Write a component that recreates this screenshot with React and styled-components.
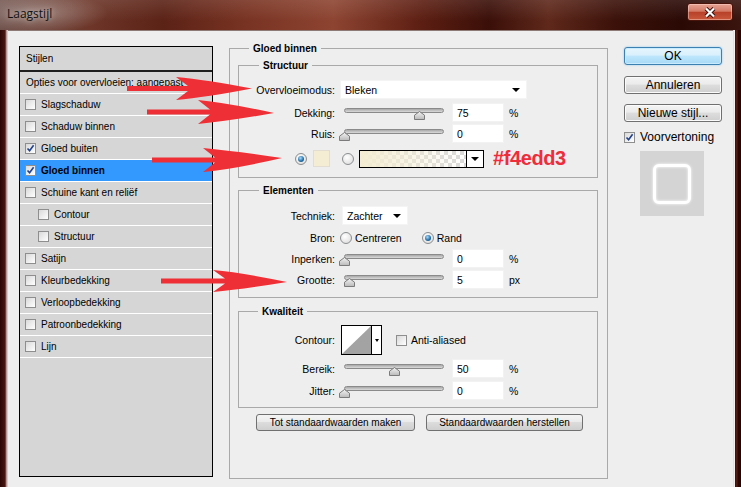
import React from "react";
import styled, { createGlobalStyle } from "styled-components";

const GlobalStyle = createGlobalStyle`
  html, body { margin: 0; padding: 0; }
  body {
    background: #2b0906;
    font-family: "Liberation Sans", Arial, sans-serif;
    font-size: 10px;
    color: #000;
  }
  * { box-sizing: border-box; }
`;

const styleList = [
  { label: "Slagschaduw" },
  { label: "Schaduw binnen" },
  { label: "Gloed buiten", checked: true },
  { label: "Gloed binnen", checked: true, active: true },
  { label: "Schuine kant en reliëf" },
  { label: "Contour", sub: true },
  { label: "Structuur", sub: true },
  { label: "Satijn" },
  { label: "Kleurbedekking" },
  { label: "Verloopbedekking" },
  { label: "Patroonbedekking" },
  { label: "Lijn" },
];

// arrow shape: shaft from x0, barbs at xb, tip at xt
const arrowPath = (x0, y, xb, xt, yt, hw) => {
  const sw = 2.5;
  const cx = xb + (xt - xb) * 0.4;
  return `M${x0} ${y - sw} L${xb + 12} ${y - sw} L${xb} ${y - hw} Q${cx} ${y - hw * 0.75} ${xt} ${yt} Q${cx} ${y + hw * 0.75} ${xb} ${y + hw} L${xb + 12} ${y + sw} L${x0} ${y + sw} Z`;
};

const arrows = [
  [127, 88.5, 176, 252, 88.5, 11.5],
  [147, 112, 198, 274, 113, 12],
  [152, 160, 203, 282, 158, 12],
  [161, 281, 213, 287, 282, 11],
];

const Check = ({ on }) => (
  <CheckBox>
    {on && (
      <svg width="9" height="9" viewBox="0 0 9 9">
        <path d="M1.5 4.5 L3.6 6.8 L7.6 1.2" fill="none" stroke="#22418f" strokeWidth="1.6" />
      </svg>
    )}
  </CheckBox>
);

const Slider = ({ pct }) => (
  <SliderWrap>
    <Track />
    <Thumb style={{ left: `calc(${pct}% - 5px)` }} width="11" height="9" viewBox="0 0 11 9">
      <defs>
        <linearGradient id="tg" x1="0" y1="0" x2="0" y2="1">
          <stop offset="0" stopColor="#f4f4f4" />
          <stop offset="1" stopColor="#b9b9b9" />
        </linearGradient>
      </defs>
      <polygon points="0.5,8.5 0.5,4.2 5.5,0.5 10.5,4.2 10.5,8.5" fill="url(#tg)" stroke="#7b7b7b" />
    </Thumb>
  </SliderWrap>
);

const SliderRow = ({ label, pct, value, unit, mt }) => (
  <Row $mt={mt}>
    <Label>{label}</Label>
    <Slider pct={pct} />
    <NumInput>{value}</NumInput>
    <Unit>{unit}</Unit>
  </Row>
);

const App = () => {
  return (
    <>
      <GlobalStyle />
      <Window>
        <TitleBar>
          <Title>Laagstijl</Title>
          <CloseButton>
            <svg width="14" height="11" viewBox="0 0 14 11">
              <path d="M3 1.5 L11 9.5 M11 1.5 L3 9.5" stroke="#3a0d08" strokeWidth="4" />
              <path d="M3 1.5 L11 9.5 M11 1.5 L3 9.5" stroke="#fff" strokeWidth="2.2" />
            </svg>
          </CloseButton>
        </TitleBar>
        <Body>
          <SideFrame $side="left" />
          <Client>
            <LeftPanel>
              <PanelHeader>Stijlen</PanelHeader>
              <StyleRow $pad={6}>Opties voor overvloeien: aangepast</StyleRow>
              {styleList.map((s) => (
                <StyleRow key={s.label} $pad={s.sub ? 18 : 5} $active={s.active}>
                  <Check on={s.checked} />
                  {s.label}
                </StyleRow>
              ))}
            </LeftPanel>

            <OuterGroup>
              <GroupTitle $indent={11}>Gloed binnen</GroupTitle>
              <Group $mt={10} $pb={8}>
                <GroupTitle $indent={20}>Structuur</GroupTitle>
                <Row $mt={7}>
                  <Label>Overvloeimodus:</Label>
                  <Select $w={187} $ml={5}>
                    Bleken
                    <Caret />
                  </Select>
                </Row>
                <SliderRow label="Dekking:" pct={75} value="75" unit="%" mt={2} />
                <SliderRow label="Ruis:" pct={0} value="0" unit="%" mt={0} />
                <Row $mt={4}>
                  <Radio $on $ml={56} />
                  <Swatch />
                  <Radio $ml={12} />
                  <GradientPicker>
                    <GradientFill />
                    <PickerArrow>
                      <Caret />
                    </PickerArrow>
                  </GradientPicker>
                  <HexNote>#f4edd3</HexNote>
                </Row>
              </Group>

              <Group $mt={12} $pb={7}>
                <GroupTitle $indent={20}>Elementen</GroupTitle>
                <Row $mt={8}>
                  <Label>Techniek:</Label>
                  <Select $w={66} $ml={7}>
                    Zachter
                    <Caret />
                  </Select>
                </Row>
                <Row $mt={1}>
                  <Label>Bron:</Label>
                  <Radio $ml={5} />
                  <OptionText>Centreren</OptionText>
                  <Radio $on $ml={20} />
                  <OptionText>Rand</OptionText>
                </Row>
                <SliderRow label="Inperken:" pct={0} value="0" unit="%" mt={0} />
                <SliderRow label="Grootte:" pct={5} value="5" unit="px" mt={0} />
              </Group>

              <Group $mt={13} $pb={6}>
                <GroupTitle $indent={19}>Kwaliteit</GroupTitle>
                <Row $mt={7} $h={30}>
                  <Label>Contour:</Label>
                  <ContourBox>
                    <svg width="29" height="28" viewBox="0 0 29 28">
                      <polygon points="0,28 29,0 29,28" fill="#a3a3a3" />
                    </svg>
                    <ContourArrow>
                      <Caret $small />
                    </ContourArrow>
                  </ContourBox>
                  <AntiAlias>
                    <Check />
                    Anti-aliased
                  </AntiAlias>
                </Row>
                <SliderRow label="Bereik:" pct={50} value="50" unit="%" mt={3} />
                <SliderRow label="Jitter:" pct={0} value="0" unit="%" mt={1} />
              </Group>

              <ButtonRow>
                <SmallButton $w={159}>Tot standaardwaarden maken</SmallButton>
                <SmallButton $w={157}>Standaardwaarden herstellen</SmallButton>
              </ButtonRow>
            </OuterGroup>

            <RightCol>
              <DialogButton $primary>OK</DialogButton>
              <DialogButton $mt={11}>Annuleren</DialogButton>
              <DialogButton $mt={10}>Nieuwe stijl...</DialogButton>
              <PreviewToggle>
                <Check on />
                Voorvertoning
              </PreviewToggle>
              <PreviewBox>
                <GlowSquare />
              </PreviewBox>
            </RightCol>
          </Client>
          <SideFrame $side="right" />
        </Body>

        <Annotations width="741" height="487" viewBox="0 0 741 487">
          {arrows.map((a, i) => (
            <path key={i} d={arrowPath(...a)} fill="#ee2f35" />
          ))}
        </Annotations>
      </Window>
    </>
  );
};

const Window = styled.div`
  position: relative;
  width: 741px;
  height: 487px;
  display: flex;
  flex-direction: column;
  overflow: hidden;
  background: #3a0e08;
`;

const TitleBar = styled.div`
  height: 30px;
  flex-shrink: 0;
  display: flex;
  justify-content: space-between;
  align-items: flex-start;
  padding: 0 8px 0 7px;
  background:
    radial-gradient(ellipse 70px 20px at 38px 13px, rgba(190, 175, 170, 0.55), rgba(190, 175, 170, 0) 100%),
    linear-gradient(180deg, rgba(255, 255, 255, 0.1), rgba(0, 0, 0, 0) 70%),
    linear-gradient(90deg, #6f514b 0%, #6d3629 12%, #5b2216 22%, #7a3423 34%, #8d4431 45%, #5c1e12 57%, #3a0f08 66%, #5f281b 74%, #3b1109 83%, #2a0905 92%, #3a140e 100%);
`;

const Title = styled.div`
  margin-top: 5px;
  font-family: "Open Sans", "Noto Sans", sans-serif;
  font-size: 12px;
  color: #111;
  text-shadow: 0 0 6px rgba(255, 255, 255, 0.7);
`;

const CloseButton = styled.div`
  margin-top: 3px;
  width: 46px;
  height: 18px;
  display: flex;
  align-items: center;
  justify-content: center;
  border: 1px solid #4a140b;
  border-radius: 3px;
  background: linear-gradient(180deg, #e7a596 0%, #d37a66 45%, #b8412a 52%, #c9583c 100%);
  box-shadow: inset 0 0 0 1px rgba(255, 220, 210, 0.45);
`;

const Body = styled.div`
  flex: 1;
  display: flex;
`;

const SideFrame = styled.div`
  width: 8px;
  flex-shrink: 0;
  background: ${(p) =>
    p.$side === "left"
      ? "linear-gradient(90deg, #2c0704 0, #4b140d 5px, #8c6a64 6px, #d6cac8 7px, #d6cac8 8px)"
      : "linear-gradient(90deg, #d8cccc 0, #f6eeee 1px, #f6eeee 2px, #3a0c07 2px, #5a2018 4px, #2a0603 5px, #2a0603 8px)"};
`;

const Client = styled.div`
  flex: 1;
  display: flex;
  align-items: flex-start;
  padding: 16px 0 0 11px;
  background: #eeeeee;
  border-top: 1px solid #8d7a77;
`;

const LeftPanel = styled.div`
  width: 194px;
  height: 431px;
  margin-top: -1px;
  flex-shrink: 0;
  border: 1px solid #000;
  background: #d6d6d6;
`;

const PanelHeader = styled.div`
  height: 25px;
  padding-left: 6px;
  display: flex;
  align-items: center;
  border-bottom: 2px solid #1e1e1e;
`;

const StyleRow = styled.div`
  height: 22px;
  display: flex;
  align-items: center;
  gap: 5px;
  padding-left: ${(p) => p.$pad}px;
  border-bottom: 1px solid #fff;
  background: ${(p) => (p.$active ? "#3399ff" : "transparent")};
  font-weight: ${(p) => (p.$active ? "bold" : "normal")};
`;

const CheckBox = styled.span`
  width: 11px;
  height: 11px;
  flex-shrink: 0;
  display: inline-flex;
  align-items: center;
  justify-content: center;
  border: 1px solid #8e8e8e;
  background: linear-gradient(135deg, #d9d9d9, #ffffff);
`;

const OuterGroup = styled.div`
  width: 379px;
  height: 431px;
  margin: 1px 0 0 16px;
  flex-shrink: 0;
  padding: 0 9px 0 8px;
  border: 1px solid #a9a9a9;
  font-size: 10.5px;
`;

const Group = styled.div`
  margin-top: ${(p) => p.$mt}px;
  padding-bottom: ${(p) => p.$pb}px;
  border: 1px solid #a9a9a9;
`;

const GroupTitle = styled.div`
  width: fit-content;
  height: 13px;
  line-height: 13px;
  margin: -7px 0 0 ${(p) => p.$indent}px;
  padding: 0 4px;
  background: #eeeeee;
  font-size: 10px;
  font-weight: bold;
`;

const Row = styled.div`
  height: ${(p) => p.$h || 21}px;
  margin-top: ${(p) => p.$mt || 0}px;
  display: flex;
  align-items: center;
`;

const Label = styled.span`
  width: 96px;
  flex-shrink: 0;
  text-align: right;
`;

const Select = styled.div`
  width: ${(p) => p.$w}px;
  height: 19px;
  margin-left: ${(p) => p.$ml}px;
  padding: 0 6px 0 4px;
  display: flex;
  align-items: center;
  justify-content: space-between;
  background: #fff;
  border: 1px solid #f4f4f4;
`;

const Caret = styled.span`
  width: 0;
  height: 0;
  border-left: ${(p) => (p.$small ? 2.5 : 4)}px solid transparent;
  border-right: ${(p) => (p.$small ? 2.5 : 4)}px solid transparent;
  border-top: ${(p) => (p.$small ? 3 : 4)}px solid #000;
`;

const SliderWrap = styled.div`
  position: relative;
  width: 100px;
  height: 21px;
  margin-left: 9px;
  flex-shrink: 0;
`;

const Track = styled.div`
  position: absolute;
  left: 0;
  right: 0;
  top: 6px;
  height: 5px;
  border: 1px solid #8a8a8a;
  border-radius: 3px;
  background: linear-gradient(180deg, #a8a8a8, #dadada);
`;

const Thumb = styled.svg`
  position: absolute;
  top: 9px;
`;

const NumInput = styled.div`
  width: 52px;
  height: 19px;
  margin-left: 8px;
  padding-left: 4px;
  display: flex;
  align-items: center;
  background: #fff;
  border: 1px solid #f2f2f2;
`;

const Unit = styled.span`
  margin-left: 5px;
`;

const Radio = styled.span`
  width: 12px;
  height: 12px;
  margin-left: ${(p) => p.$ml || 0}px;
  flex-shrink: 0;
  display: inline-flex;
  align-items: center;
  justify-content: center;
  border: 1px solid #8b8d8f;
  border-radius: 50%;
  background: radial-gradient(circle at 40% 35%, #ffffff, #d8d8d8);

  &::after {
    content: "";
    display: ${(p) => (p.$on ? "block" : "none")};
    width: 6px;
    height: 6px;
    border-radius: 50%;
    background: radial-gradient(circle at 40% 35%, #a9dcff, #1f6aa3 60%, #12466f);
  }
`;

const Swatch = styled.span`
  width: 17px;
  height: 17px;
  margin-left: 6px;
  background: #f4edd3;
  border: 1px solid #e2ddd0;
`;

const GradientPicker = styled.div`
  width: 125px;
  height: 18px;
  margin-left: 5px;
  display: flex;
  border: 1px solid #000;
`;

const GradientFill = styled.div`
  flex: 1;
  background:
    linear-gradient(90deg, #f4edd3 0%, rgba(244, 237, 211, 0.6) 45%, rgba(244, 237, 211, 0) 100%),
    repeating-conic-gradient(#d9d9d9 0 25%, #ffffff 0 50%) 0 0 / 8px 8px;
`;

const PickerArrow = styled.div`
  width: 17px;
  display: flex;
  align-items: center;
  justify-content: center;
  border-left: 1px solid #000;
  background: #fff;
`;

const HexNote = styled.span`
  margin-left: 9px;
  font-size: 20px;
  font-weight: bold;
  letter-spacing: -0.4px;
  color: #ee2c3a;
`;

const OptionText = styled.span`
  margin-left: 3px;
`;

const ContourBox = styled.div`
  width: 41px;
  height: 30px;
  margin-left: 6px;
  display: flex;
  border: 1px solid #000;
  background: #fff;
`;

const ContourArrow = styled.div`
  flex: 1;
  display: flex;
  align-items: center;
  justify-content: center;
  border-left: 1px solid #000;
`;

const AntiAlias = styled.span`
  margin-left: 14px;
  display: flex;
  align-items: center;
  gap: 4px;
`;

const ButtonRow = styled.div`
  margin: 6px 0 0 18px;
  display: flex;
  gap: 11px;
`;

const SmallButton = styled.div`
  width: ${(p) => p.$w}px;
  height: 17px;
  display: flex;
  align-items: center;
  justify-content: center;
  font-size: 10px;
  border: 1px solid #707070;
  border-radius: 3px;
  background: linear-gradient(180deg, #f4f4f4 0%, #ebebeb 45%, #dcdcdc 50%, #cfcfcf 100%);
`;

const RightCol = styled.div`
  width: 98px;
  margin-left: 16px;
  display: flex;
  flex-direction: column;
  font-size: 12px;
`;

const DialogButton = styled.div`
  height: 18px;
  margin-top: ${(p) => p.$mt || 0}px;
  display: flex;
  align-items: center;
  justify-content: center;
  border: 1px solid ${(p) => (p.$primary ? "#3c7fb1" : "#707070")};
  border-radius: 3px;
  background: ${(p) =>
    p.$primary
      ? "linear-gradient(180deg, #e6f5fd 0%, #d9f0fc 45%, #bee6fd 50%, #a7d9f5 100%)"
      : "linear-gradient(180deg, #f4f4f4 0%, #ebebeb 45%, #dddddd 50%, #cfcfcf 100%)"};
  box-shadow: ${(p) => (p.$primary ? "0 0 2px #7ec4ee, inset 0 0 0 1px #c8ecfd" : "inset 0 0 0 1px #fbfbfb")};
`;

const PreviewToggle = styled.div`
  height: 12px;
  margin-top: 9px;
  display: flex;
  align-items: center;
  gap: 5px;
`;

const PreviewBox = styled.div`
  width: 64px;
  height: 65px;
  margin: 8px 0 0 16px;
  display: flex;
  align-items: center;
  justify-content: center;
  background: #d4d4d4;
`;

const GlowSquare = styled.div`
  width: 38px;
  height: 40px;
  border: 3px solid #fff;
  border-radius: 6px;
  box-shadow: 0 0 3px #fff, inset 0 0 3px #fff;
  background: #d4d4d4;
`;

const Annotations = styled.svg`
  position: absolute;
  left: 0;
  top: 0;
  pointer-events: none;
`;

export default App;
